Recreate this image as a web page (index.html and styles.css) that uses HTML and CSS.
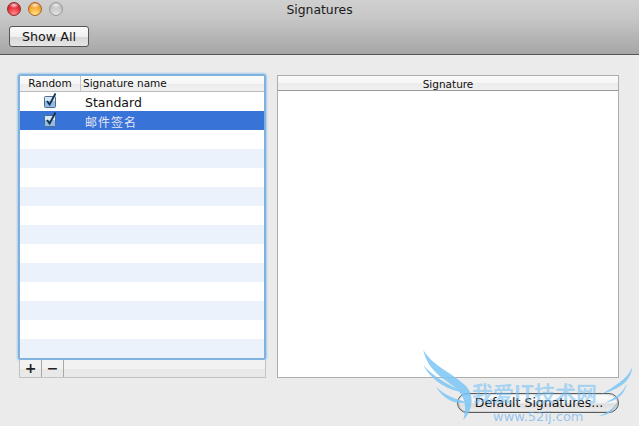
FILE: index.html
```html
<!DOCTYPE html>
<html lang="en">
<head>
<meta charset="utf-8">
<title>Signatures</title>
<link rel="stylesheet" href="styles.css">
</head>
<body>
<div class="window">
  <header class="toolbar">
    <div class="titlebar">
      <div class="lights">
        <span class="light red"></span>
        <span class="light orange"></span>
        <span class="light grey"></span>
      </div>
      <div class="title">Signatures</div>
    </div>
    <button class="show-all">Show All</button>
  </header>
  <main class="content">
    <section class="left">
      <div class="list">
        <div class="list-head">
          <div class="col-random">Random</div>
          <div class="col-name">Signature name</div>
        </div>
        <div class="row">
          <div class="col-check"><svg class="check" viewBox="0 0 13 15"><rect x="0.5" y="3.5" width="11" height="11" rx="1" fill="#8fbde6" stroke="#4f6c8a"/><rect x="1" y="4" width="10" height="4" fill="#d5e8f7"/><path d="M3 8 L5.6 11.5 L11.5 0.5" fill="none" stroke="#16304c" stroke-width="1.8"/></svg></div>
          <div class="row-name">Standard</div>
        </div>
        <div class="row selected">
          <div class="col-check"><svg class="check" viewBox="0 0 13 15"><rect x="0.5" y="3.5" width="11" height="11" rx="1" fill="#8fbde6" stroke="#4f6c8a"/><rect x="1" y="4" width="10" height="4" fill="#d5e8f7"/><path d="M3 8 L5.6 11.5 L11.5 0.5" fill="none" stroke="#16304c" stroke-width="1.8"/></svg></div>
          <div class="row-name cjk">邮件签名</div>
        </div>
        <div class="row"></div>
        <div class="row alt"></div>
        <div class="row"></div>
        <div class="row alt"></div>
        <div class="row"></div>
        <div class="row alt"></div>
        <div class="row"></div>
        <div class="row alt"></div>
        <div class="row"></div>
        <div class="row alt"></div>
        <div class="row"></div>
        <div class="row alt"></div>
      </div>
      <div class="list-bar">
        <div class="bar-btn">+</div>
        <div class="bar-btn">−</div>
      </div>
    </section>
    <section class="right">
      <div class="sig-panel">
        <div class="sig-head">Signature</div>
        <div class="sig-body"></div>
      </div>
      <button class="default-btn">Default Signatures...</button>
    </section>
  </main>
  <div class="watermark">
    <svg class="wings" viewBox="0 0 687 258">
      <path d="M40 30 C70 80 130 100 170 140 C192 165 190 210 160 240 C172 200 165 165 130 138 C95 112 52 88 40 30 Z" fill="#7cc6f6"/>
      <path d="M40 75 C70 110 110 132 165 158 C120 152 68 128 40 75 Z" fill="#7cc6f6"/>
      <path d="M78 140 C105 165 135 180 178 186 C135 197 100 176 78 140 Z" fill="#7cc6f6"/>
      <path d="M667 82 C650 120 612 140 575 162 C612 152 662 132 667 82 Z" fill="#7cc6f6"/>
      <path d="M650 130 C640 160 612 176 585 188 C620 184 646 162 650 130 Z" fill="#7cc6f6"/>
      <path d="M622 185 C612 205 590 220 565 228 C592 228 615 212 622 185 Z" fill="#7cc6f6"/>
    </svg>
    <div class="wm-title">我爱IT技术网</div>
    <div class="wm-url">www.52ij.com</div>
  </div>
</div>
</body>
</html>
```
FILE: styles.css
```css
* { box-sizing: border-box; }
html, body { margin: 0; padding: 0; }
body {
  width: 639px;
  height: 426px;
  overflow: hidden;
  background: #ebebeb;
  font-family: "DejaVu Sans", sans-serif;
  color: #111;
}
.window { position: relative; width: 639px; height: 426px; display: flex; flex-direction: column; }
.toolbar {
  height: 55px;
  background: linear-gradient(#d0d0d0, #c6c6c6 35%, #a6a6a6);
  border-bottom: 1px solid #555;
  display: flex;
  flex-direction: column;
  align-items: flex-start;
}
.titlebar { position: relative; width: 100%; height: 26px; flex: none; }
.lights { display: flex; gap: 7px; padding: 2px 0 0 7px; }
.light { width: 14px; height: 14px; border-radius: 50%; border: 1px solid #777; }
.red {
  background: radial-gradient(ellipse 5px 3px at 50% 18%, #ffd8d8, transparent),
    radial-gradient(circle at 50% 90%, #ff8a8a, #e8303c 55%, #b01c28);
  border-color: #8f2a2e;
}
.orange {
  background: radial-gradient(ellipse 5px 3px at 50% 18%, #ffeed0, transparent),
    radial-gradient(circle at 50% 90%, #ffe38a, #f6a733 55%, #cf701c);
  border-color: #a2662a;
}
.grey {
  background: radial-gradient(ellipse 5px 3px at 50% 18%, #eeeeee, transparent),
    radial-gradient(circle at 50% 90%, #e2e2e2, #c4c4c4 60%, #a8a8a8);
  border-color: #999;
}
.title {
  position: absolute;
  left: 0;
  right: 0;
  top: 1px;
  text-align: center;
  font-size: 12.4px;
  line-height: 18px;
  color: #1a1a1a;
}
.show-all {
  margin: 0 0 0 9px;
  width: 80px;
  height: 21px;
  padding: 1px 0 0;
  border: 1px solid #555;
  border-radius: 3px;
  background: linear-gradient(#fbfbfb, #f0f0f0 50%, #d8d8d8 52%, #e6e6e6);
  font: 12.7px/18px "DejaVu Sans", sans-serif;
  color: #111;
}
.content { flex: 1; display: flex; gap: 11px; padding: 19px 20px 0 18px; align-items: flex-start; }
.left { width: 248px; flex: none; display: flex; flex-direction: column; align-items: center; }
.list {
  width: 248px;
  height: 286px;
  border: 2px solid #7fb2de;
  border-radius: 3px;
  background: #fff;
  box-shadow: 0 0 2px 1px #a8cbe8;
  overflow: hidden;
}
.list-head {
  display: flex;
  height: 16px;
  font-size: 10.5px;
  line-height: 15px;
  background: linear-gradient(#fcfcfc, #f6f6f6 50%, #ececec 52%, #f0f0f0);
  border-bottom: 1px solid #bbb;
}
.col-random { width: 61px; flex: none; text-align: center; border-right: 1px solid #c4c4c4; }
.col-name { flex: 1; padding-left: 2px; }
.row { height: 19px; display: flex; align-items: center; background: #fff; }
.alt { background: #ecf2fc; }
.selected { background: #3874d8; color: #e6e4f8; }
.col-check { width: 61px; flex: none; height: 100%; display: flex; justify-content: center; align-items: flex-start; padding-top: 1px; }
.check { width: 13px; height: 15px; display: block; }
.row-name { font-size: 12.5px; padding: 1px 0 0 4px; }
.cjk { font-family: "Noto Sans CJK SC", sans-serif; font-size: 12px; letter-spacing: 1px; }
.list-bar {
  width: 247px;
  height: 18px;
  margin-left: 1px;
  display: flex;
  border: 1px solid #c2c2c2;
  border-top: 0;
  background: linear-gradient(#f2f2f2 50%, #e9e9e9 52%);
}
.bar-btn {
  width: 22px;
  height: 17px;
  border-right: 1px solid #a8a8a8;
  text-align: center;
  font: bold 14px/17px "DejaVu Sans", sans-serif;
  color: #222;
}
.right { width: 342px; flex: none; display: flex; flex-direction: column; align-items: flex-end; }
.sig-panel { width: 342px; height: 303px; margin-top: 1px; border: 1px solid #adadad; background: #fff; display: flex; flex-direction: column; }
.sig-head {
  height: 15px;
  font-size: 10.5px;
  line-height: 16px;
  text-align: center;
  background: linear-gradient(#fafafa, #f6f6f6 50%, #ececec 52%, #efefef);
  border-bottom: 1px solid #999;
}
.sig-body { flex: 1; }
.default-btn {
  margin-top: 15px;
  width: 162px;
  height: 20px;
  padding: 0 0 0 2px;
  border: 1px solid #5a5a5a;
  border-radius: 10px;
  background: linear-gradient(#fdfdfd, #f2f2f2 50%, #dcdcdc 55%, #efefef);
  box-shadow: inset 0 0 2px #888;
  font: 12.5px/18px "DejaVu Sans", sans-serif;
  color: #111;
}
.watermark { position: absolute; left: 410px; top: 340px; width: 229px; height: 86px; pointer-events: none; }
.wings { position: absolute; left: 0; top: 0; width: 229px; height: 86px; opacity: 0.85; }
.wm-title {
  position: absolute;
  left: 62px;
  top: 39px;
  font: bold 21px/26px "Noto Sans CJK SC", sans-serif;
  color: rgba(110, 190, 245, 0.55);
  white-space: nowrap;
}
.wm-url {
  position: absolute;
  left: 83px;
  top: 69px;
  font: 13px/15px "DejaVu Sans", sans-serif;
  color: rgba(90, 170, 240, 0.6);
  white-space: nowrap;
}
```
